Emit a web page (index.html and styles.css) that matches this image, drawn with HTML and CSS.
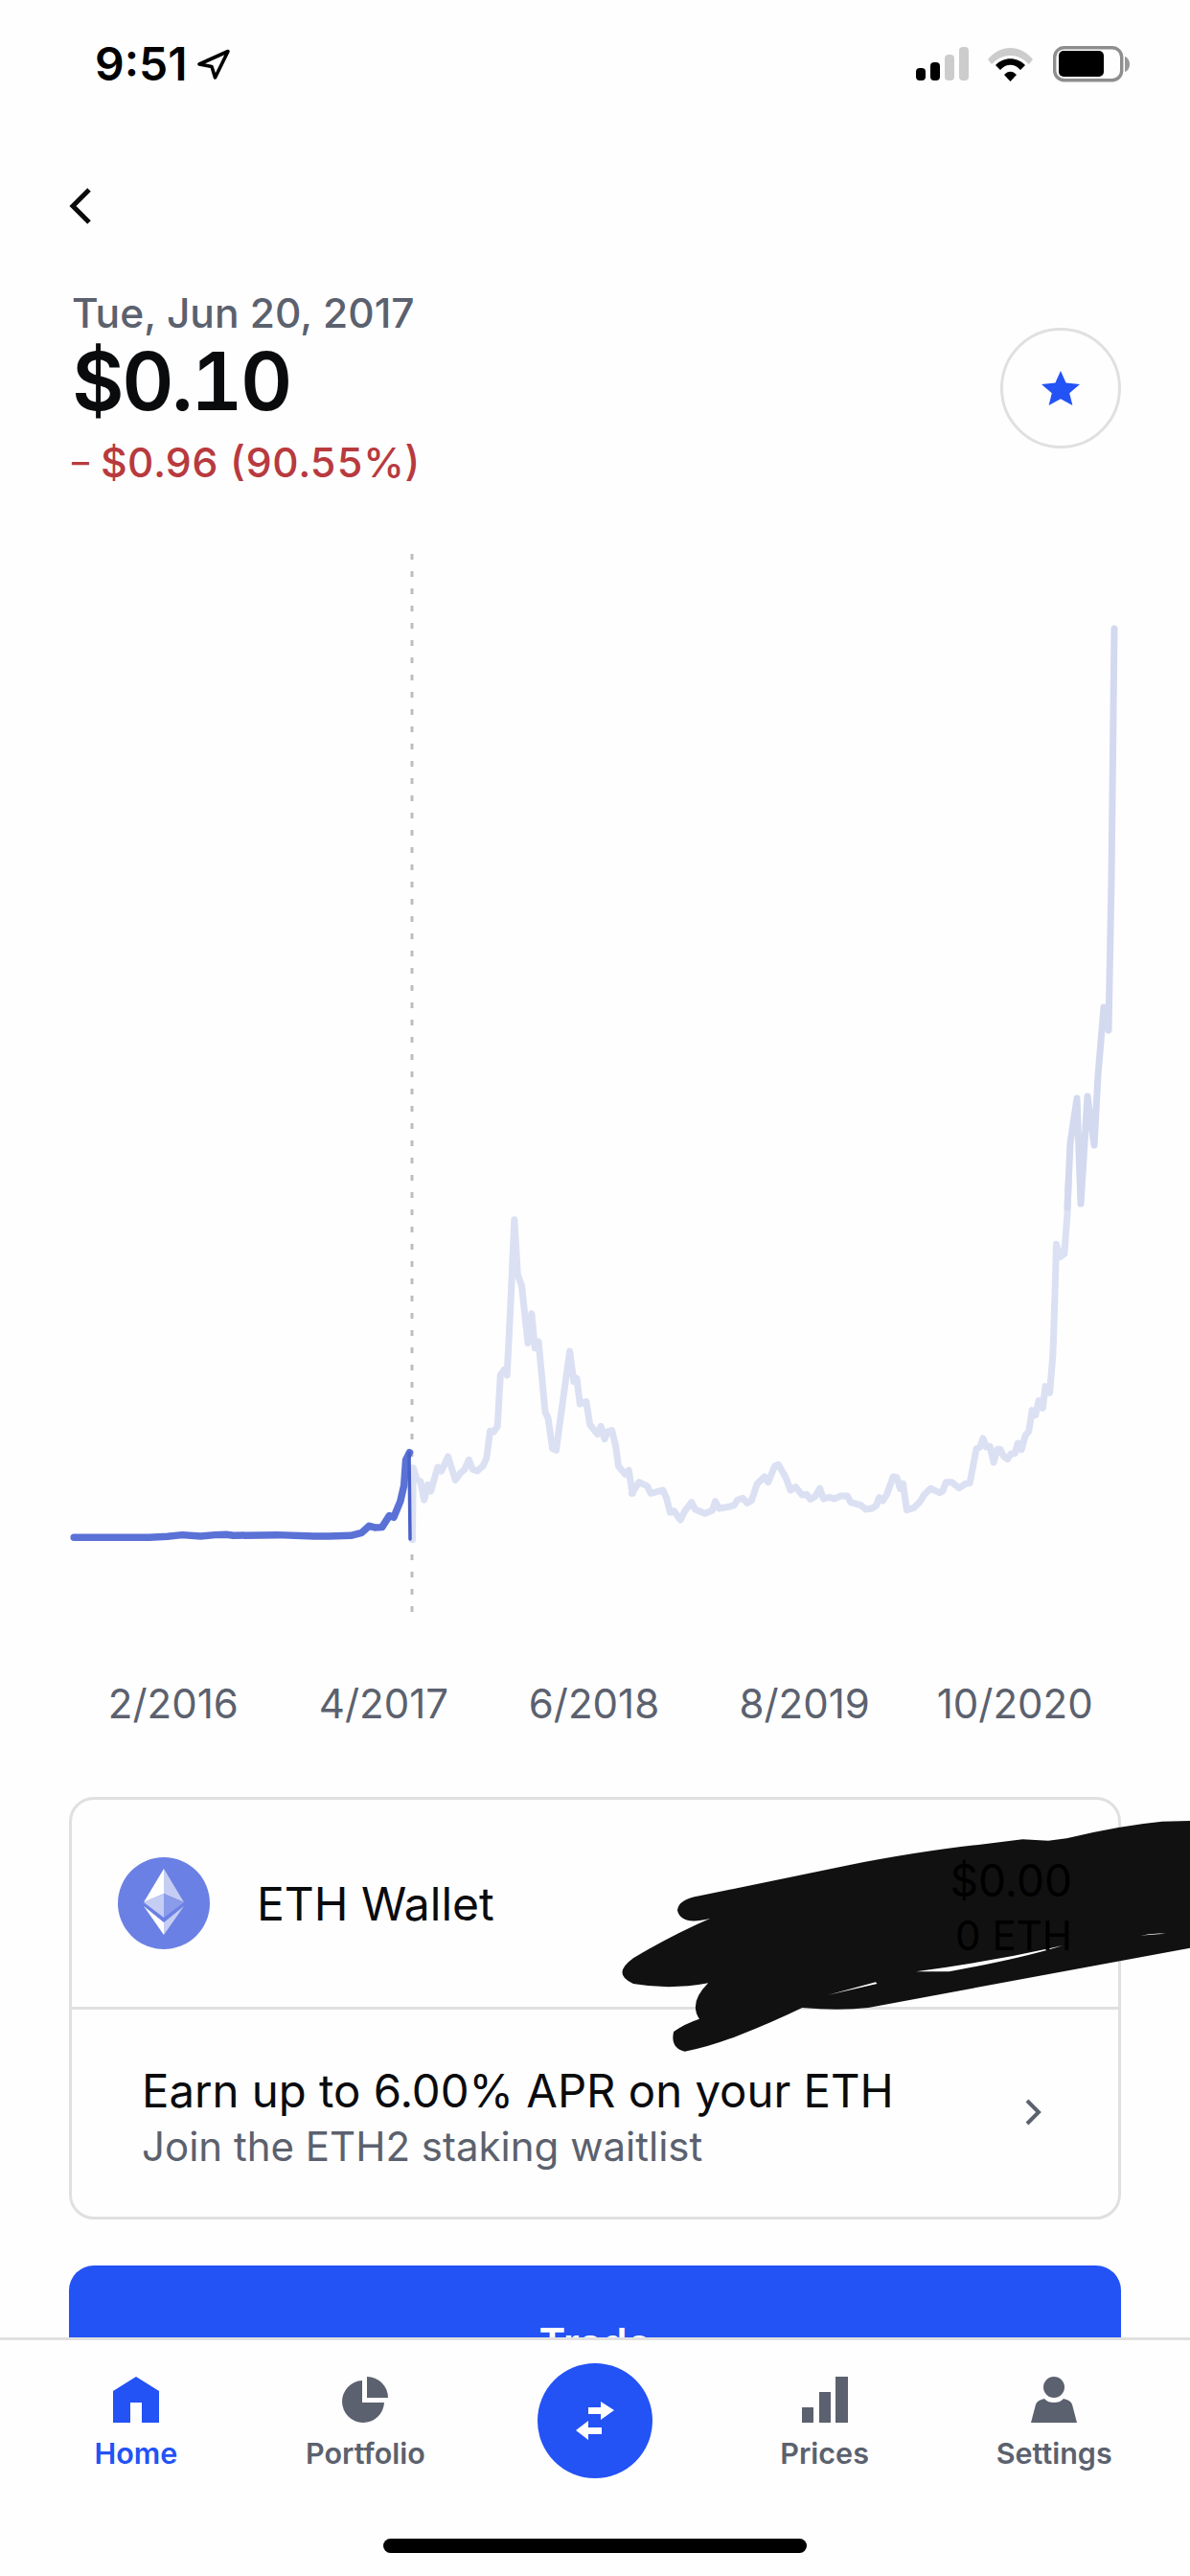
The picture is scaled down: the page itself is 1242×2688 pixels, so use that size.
FILE: index.html
```html
<!DOCTYPE html>
<html lang="en">
<head>
<meta charset="utf-8">
<title>ETH price</title>
<link rel="stylesheet" href="styles.css">
</head>
<body>
<div class="phone">
  <header class="status">
    <div class="clock">
      <span class="time">9:51</span>
      <svg class="loc" width="36" height="34" viewBox="0 0 36 34"><path d="M33 3.500 3 17l13 2.500L19.500 31z" fill="none" stroke="#000" stroke-width="3.6" stroke-linejoin="round"/></svg>
    </div>
    <div class="sys">
      <svg width="56" height="36" viewBox="0 0 56 36"><rect x="1" y="22" width="10" height="13" rx="4" fill="#000"/><rect x="16" y="16" width="10" height="19" rx="4" fill="#000"/><rect x="31" y="8" width="10" height="27" rx="4" fill="#ccc"/><rect x="46" y="0" width="10" height="35" rx="4" fill="#ccc"/></svg>
      <svg width="48" height="36" viewBox="0 0 48 36"><path d="M0 13C13-3 34-3 47 13l-4 5C31 6 16 6 4 18z" fill="#ccc"/><path d="M8 19C16 10 31 10 39 19l-5 5C28 17 19 17 13 24z" fill="#000"/><path d="M17 29C21 24.500 26 24.500 30 29l-6.500 7z" fill="#000"/></svg>
      <svg width="80" height="38" viewBox="0 0 80 38"><rect x="1.700" y="1.700" width="70" height="34" rx="10" fill="none" stroke="#8e8e8e" stroke-width="3.400"/><rect x="6" y="5" width="47" height="27" rx="5" fill="#000"/><path d="M75 11c3 1 5 4 5 8s-2 7-5 8z" fill="#999"/></svg>
    </div>
  </header>

  <div class="back">
    <svg width="24" height="40" viewBox="0 0 24 40"><path d="M21 3 4 20l17 17" fill="none" stroke="#0a0b0d" stroke-width="5"/></svg>
  </div>

  <section class="head">
    <div class="head-text">
      <div class="date">Tue, Jun 20, 2017</div>
      <div class="price">$0.10</div>
      <div class="delta"><span class="minus">–</span><span>$0.96 (90.55%)</span></div>
    </div>
    <div class="star-btn">
      <svg width="40" height="36" viewBox="0 0 40 36"><path d="M20 0l5.600 12.600L40 14l-10.800 9.300L32.400 36 20 29.200 7.600 36l3.200-12.700L0 14l14.400-1.400z" fill="#2352f5"/></svg>
    </div>
  </section>

  <svg class="chart" viewBox="0 507 1242 1240" width="1242" height="1240">
    <line x1="430" y1="578" x2="430" y2="1684" stroke="#bdbdbd" stroke-width="3" stroke-dasharray="6 12"/>
    <g fill="none" stroke="#dbe0f3" stroke-width="7" stroke-linejoin="round" stroke-linecap="round">
      <polyline transform="translate(60 1200) scale(.3827 .3333)" vector-effect="non-scaling-stroke" points="968,1220 970,995 980,1030 990,1038 1000,1095 1010,1048 1018,1068 1037,993 1047,1005 1065,960 1085,1033 1100,1010 1110,1000 1122,970 1132,1000 1145,1005 1160,990 1170,965 1180,880 1190,882 1200,865 1208,705 1218,688 1226,705 1235,500 1246,218 1255,390 1266,425 1283,605 1293,512 1302,620 1312,600 1330,820 1338,840 1350,935 1360,940 1380,770 1397,630 1408,725 1416,715 1425,795 1442,788 1452,860 1473,890 1482,865 1492,905 1500,882 1512,878 1522,925 1530,990 1548,1015 1558,1003 1568,1075"/>
      <polyline transform="translate(600 1200) scale(.3827 .3333)" vector-effect="non-scaling-stroke" points="155,1075 175,1040 197,1052 207,1075 240,1065 250,1090 260,1135 270,1130 288,1158 300,1130 318,1103 328,1125 355,1138 375,1128 383,1100 393,1122 420,1117 435,1112 443,1096 458,1090 470,1105 482,1097 497,1045 517,1023 527,1040 545,990 555,985 575,1025 588,1065 602,1055 620,1080 632,1078 642,1093 655,1085 668,1060 678,1092 695,1087 707,1092 725,1083 743,1083 752,1103 780,1112 793,1125 810,1122 822,1113 830,1088 840,1098 850,1080 868,1023 878,1025 887,1060 895,1045 905,1127 925,1120 942,1100 952,1080 970,1060 995,1073 1003,1068 1012,1040 1028,1040 1048,1058 1065,1045 1077,1043 1095,935 1105,930 1113,903 1122,930 1132,928 1142,978 1152,937 1160,937 1170,960 1180,968 1190,950 1200,950 1208,918 1218,938 1228,895 1238,880 1247,815 1256,830 1265,785 1276,808 1283,740 1295,760 1303,650 1305,600 1310,420 1313,295 1323,335 1335,325 1343,200 1346,100"/>
      <polyline stroke="#d3d9ef" points="1114,1260 1117,1193 1124,1146 1128,1256 1135,1144 1142,1195 1146,1122 1152,1051 1157,1075 1160,917 1163,656"/>
    </g>
    <g fill="none" stroke="#5a71d6" stroke-width="7.500" stroke-linejoin="round" stroke-linecap="round">
      <polyline transform="translate(60 1200) scale(.3827 .3333)" vector-effect="non-scaling-stroke" points="45,1213 250,1213 300,1210 340,1205 390,1209 430,1205 460,1204 480,1207 600,1205 700,1209 740,1209 800,1207 830,1198 850,1177 865,1182 885,1181 905,1145 917,1150 935,1100 945,1050 950,970 960,947"/>
      <polyline stroke="#4a60c8" stroke-width="3.500" points="427,1516 428,1606"/>
    </g>
  </svg>

  <div class="axis">
    <span>2/2016</span><span>4/2017</span><span>6/2018</span><span>8/2019</span><span>10/2020</span>
  </div>

  <section class="card">
    <div class="wallet">
      <svg class="eth" width="96" height="96" viewBox="0 0 96 96">
        <circle cx="48" cy="48" r="48" fill="#6b80e4"/>
        <path d="M48 12 27 47l21-9z" fill="#fff"/>
        <path d="M48 12l21 35-21-9z" fill="#c5cdf3"/>
        <path d="M48 38 27 47l21 16z" fill="#c5cdf3"/>
        <path d="M48 38l21 9-21 16z" fill="#8a9bea"/>
        <path d="M27 51l21 17v13z" fill="#fff"/>
        <path d="M69 51 48 68v13z" fill="#c5cdf3"/>
      </svg>
      <span class="wallet-name">ETH Wallet</span>
      <div class="balance">
        <span class="bal-usd">$0.00</span>
        <span class="bal-eth">0 ETH</span>
      </div>
    </div>
    <div class="earn">
      <div class="earn-text">
        <div class="earn-title">Earn up to 6.00% APR on your ETH</div>
        <div class="earn-sub">Join the ETH2 staking waitlist</div>
      </div>
      <svg class="earn-arrow" width="19" height="28" viewBox="0 0 19 28"><path d="M3 2l12 12L3 26" fill="none" stroke="#5b616e" stroke-width="4"/></svg>
    </div>
  </section>

  <div class="trade">Trade</div>

  <svg class="scribble" viewBox="0 1850 1242 320" width="1242" height="320">
    <g transform="translate(40 1850) scale(.7666 .3333)">
      <path d="M870 430Q872 395 900 385L1100 290Q1200 245 1280 225L1340 208 1375 212 1400 205Q1470 165 1530 152L1568 150V548L1130 735Q1090 745 1040 735Q1000 780 950 825Q910 860 880 872Q860 860 865 810Q880 785 900 770Q885 720 912 658Q860 680 810 660Q780 630 810 580Q860 510 915 455Q875 480 870 430Z" fill="#111"/>
      <path d="M1075 695 1140 655 1142 660ZM1195 622Q1300 590 1395 540Q1340 580 1240 622ZM1500 510Q1515 500 1535 503Q1515 505 1500 510Z" fill="#fff"/>
    </g>
  </svg>

  <nav class="tabs">
    <div class="tab active">
      <svg width="48" height="48" viewBox="0 0 48 48"><path d="M24 0 48 15V48H30V27H18V48H0V15z" fill="#2352f5"/></svg>
      <span>Home</span>
    </div>
    <div class="tab">
      <svg width="48" height="48" viewBox="0 0 48 48"><path d="M21 4A22 22 0 1 0 44 27H21z" fill="#5b616e"/><path d="M26 0A22 22 0 0 1 48 22H26z" fill="#5b616e"/></svg>
      <span>Portfolio</span>
    </div>
    <div class="tab center">
      <div class="swap">
        <svg width="42" height="42" viewBox="0 0 42 42"><path d="M14 7H27V1L41 10 27 20V14H14zM28 28H14V21L1 31 14 41V35H28z" fill="#fff"/></svg>
      </div>
    </div>
    <div class="tab">
      <svg width="48" height="48" viewBox="0 0 48 48"><rect y="32" width="12" height="16" fill="#5b616e"/><rect x="18" y="16" width="12" height="32" fill="#5b616e"/><rect x="35" width="13" height="48" fill="#5b616e"/></svg>
      <span>Prices</span>
    </div>
    <div class="tab">
      <svg width="48" height="48" viewBox="0 0 48 48"><ellipse cx="24" cy="11" rx="11" ry="11" fill="#5b616e"/><path d="M0 48 5 29C6 26 9 24 14 23c3 3 6 4 10 4s7-1 10-4c5 1 8 3 9 6l5 19z" fill="#5b616e"/></svg>
      <span>Settings</span>
    </div>
    <div class="home-bar"></div>
  </nav>
</div>
</body>
</html>
```

FILE: styles.css
```css
* { box-sizing: border-box; }
html, body { margin: 0; padding: 0; background: #fefefe; }
body { font-family: Inter, "Liberation Sans", sans-serif; color: #0a0b0d; }
svg { display: block; }

.phone { position: relative; width: 1242px; height: 2688px; overflow: hidden; background: #fefefe; }

.status { height: 134px; display: flex; align-items: center; justify-content: space-between; padding: 0 63px 0 99px; }
.clock { display: flex; align-items: center; gap: 9px; }
.time { font-size: 48px; font-weight: 600; line-height: 56px; color: #000; }
.sys { display: flex; align-items: center; gap: 20px; }

.back { height: 169px; padding: 61px 0 0 72px; }

.head { display: flex; align-items: center; justify-content: space-between; padding: 0 72px 0 75px; height: 204px; }
.date { font-size: 42.500px; font-weight: 500; line-height: 48px; color: #5b616e; }
.price { font-size: 84px; font-weight: 600; line-height: 94px; letter-spacing: -2.500px; font-variant-numeric: tabular-nums; }
.delta { display: flex; align-items: center; gap: 12px; font-size: 43px; font-weight: 500; line-height: 50px; margin-top: 12px; color: #b83a3e; font-variant-numeric: tabular-nums; }
.minus { font-size: 36px; }
.star-btn { width: 126px; height: 126px; border: 3px solid #e0e0e0; border-radius: 50%; display: flex; align-items: center; justify-content: center; }

.axis { margin: 0 0 0 71px; width: 1098px; height: 60px; display: grid; grid-template-columns: repeat(5, 1fr); align-items: center; justify-items: center; font-size: 42px; color: #5b616e; }

.card { margin: 68px 72px 0; width: 1098px; border: 3px solid #e0e0e0; border-radius: 26px; }
.wallet { height: 219px; border-bottom: 3px solid #e0e0e0; display: flex; align-items: center; padding: 0 48px 0 48px; }
.eth { flex: none; }
.wallet-name { margin-left: 49px; font-size: 48px; }
.balance { position: relative; z-index: 2; margin-left: auto; display: flex; flex-direction: column; align-items: flex-end; gap: 4px; color: #000; font-size: 46px; line-height: 54px; padding-top: 10px; }
.bal-eth { font-size: 42px; }
.earn { height: 216px; display: flex; align-items: center; justify-content: space-between; padding: 0 79px 0 73px; }
.earn-text { padding-top: 10px; }
.earn-arrow { margin-top: -2px; }
.earn-title { font-size: 47.300px; line-height: 56px; }
.earn-sub { font-size: 42px; line-height: 52px; margin-top: 4px; color: #5b616e; }

.trade { margin: 48px 72px 0; width: 1098px; height: 160px; background: #2352f5; border-radius: 26px; color: #fff; font-size: 42px; font-weight: 600; display: flex; align-items: center; justify-content: center; }

.scribble { position: absolute; z-index: 1; left: 0; top: 1850px; }

.tabs { position: absolute; z-index: 3; left: 0; right: 0; bottom: 0; height: 249px; border-top: 3px solid #e0e0e0; background: #fefefe; display: grid; grid-template-columns: repeat(5, 1fr); padding: 38px 22px 0; align-content: start; }
.tab { display: flex; flex-direction: column; align-items: center; gap: 12px; font-size: 30.500px; font-weight: 600; line-height: 40px; color: #5b616e; }
.tab.active { color: #2352f5; }
.tab.center { margin-top: -14px; }
.swap { width: 120px; height: 120px; border-radius: 50%; background: #2352f5; display: flex; align-items: center; justify-content: center; }
.home-bar { position: absolute; left: 400px; top: 207px; width: 442px; height: 15px; border-radius: 8px; background: #000; }
```
